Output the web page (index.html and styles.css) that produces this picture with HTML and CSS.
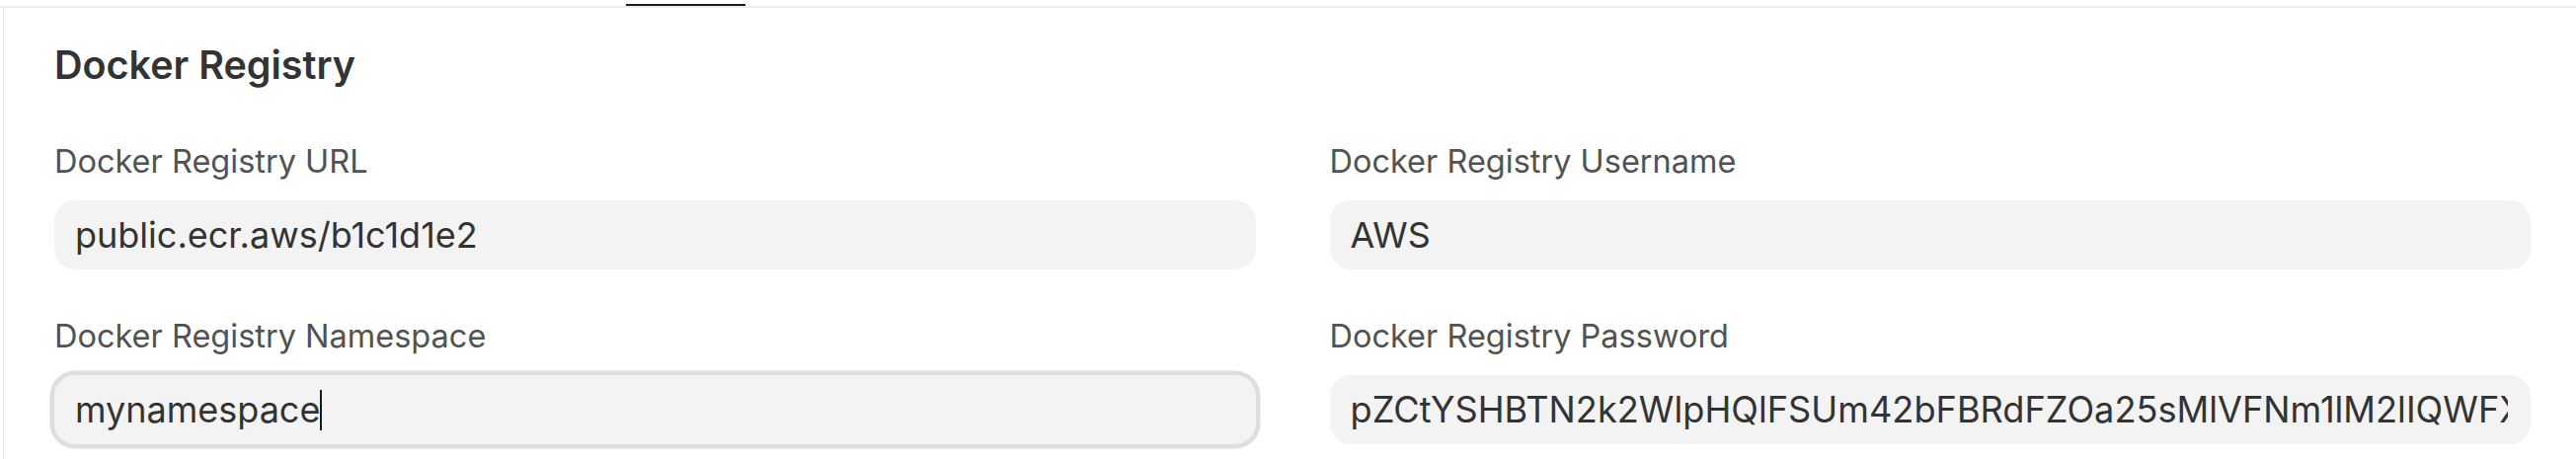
FILE: index.html
```html
<!DOCTYPE html>
<html lang="en">
<head>
<meta charset="utf-8">
<title>Docker Registry</title>
<link rel="stylesheet" href="styles.css">
</head>
<body>
  <div class="tabs"><div class="tab-indicator"></div></div>
  <section class="card">
    <h2 class="card-title">Docker Registry</h2>
    <div class="form-grid">
      <div class="field">
        <label class="field-label">Docker Registry URL</label>
        <div class="input"><span class="input-value">public.ecr.aws/b1c1d1e2</span></div>
      </div>
      <div class="field">
        <label class="field-label">Docker Registry Username</label>
        <div class="input"><span class="input-value">AWS</span></div>
      </div>
      <div class="field">
        <label class="field-label">Docker Registry Namespace</label>
        <div class="input input-focused"><span class="input-value">mynamespace<span class="caret"></span></span></div>
      </div>
      <div class="field">
        <label class="field-label">Docker Registry Password</label>
        <div class="input input-secret"><span class="input-value">pZCtYSHBTN2k2WlpHQlFSUm42bFBRdFZOa25sMlVFNm1lM2lIQWFXd2NTZz0=</span></div>
      </div>
    </div>
  </section>
</body>
</html>
```
FILE: styles.css
```css
* {
  box-sizing: border-box;
}

html,
body {
  margin: 0;
  background: #ffffff;
}

body {
  font-family: Inter, "Noto Sans", "Liberation Sans", sans-serif;
  -webkit-font-smoothing: antialiased;
  overflow: hidden;
}

.tabs {
  height: 8px;
  border-bottom: 2px solid #ececec;
  padding-left: 634px;
  display: flex;
  align-items: flex-end;
}

.tab-indicator {
  width: 121px;
  height: 2px;
  background: #1c1c1c;
}

.card {
  margin-left: 3px;
  border-left: 1px solid #e6e6e6;
  padding: 35px 46px 10px 51px;
  min-height: 457px;
}

.card-title {
  margin: 0 0 55px;
  font-size: 39.5px;
  line-height: 47px;
  font-weight: 600;
  color: #333333;
}

.form-grid {
  display: grid;
  grid-template-columns: repeat(2, minmax(0, 1fr));
  column-gap: 75px;
  row-gap: 49px;
}

.field {
  display: flex;
  flex-direction: column;
  min-width: 0;
}

.field-label {
  display: block;
  font-size: 32.5px;
  line-height: 38px;
  color: #525252;
  margin-bottom: 20px;
}

.input {
  height: 70px;
  border-radius: 21px;
  background: #f3f3f3;
  padding: 0 23px 0 21px;
  display: flex;
  align-items: center;
  font-size: 36px;
  color: #333333;
}

.input-secret {
  font-size: 36.2px;
}

.input-value {
  display: block;
  flex: 1;
  min-width: 0;
  overflow: hidden;
  white-space: nowrap;
  line-height: 44px;
}

.input-focused {
  box-shadow: 0 0 0 4.5px #dedede;
}

.caret {
  display: inline-block;
  width: 1.5px;
  height: 41px;
  background: #1a1a1a;
  vertical-align: -8px;
}
```
